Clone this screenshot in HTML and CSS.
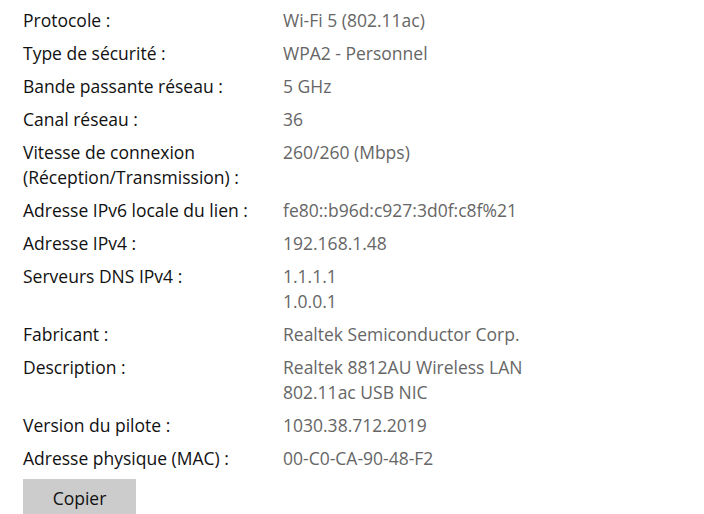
FILE: index.html
```html
<!DOCTYPE html>
<html lang="fr">
<head>
<meta charset="utf-8">
<link rel="stylesheet" href="styles.css">
</head>
<body>
<div class="props">
  <div class="label">Protocole :</div><div class="value">Wi-Fi 5 (802.11ac)</div>
  <div class="label">Type de sécurité :</div><div class="value">WPA2 - Personnel</div>
  <div class="label">Bande passante réseau :</div><div class="value">5 GHz</div>
  <div class="label">Canal réseau :</div><div class="value">36</div>
  <div class="label">Vitesse de connexion<br>(Réception/Transmission) :</div><div class="value">260/260 (Mbps)</div>
  <div class="label">Adresse IPv6 locale du lien :</div><div class="value">fe80::b96d:c927:3d0f:c8f%21</div>
  <div class="label">Adresse IPv4 :</div><div class="value">192.168.1.48</div>
  <div class="label">Serveurs DNS IPv4 :</div><div class="value">1.1.1.1<br>1.0.0.1</div>
  <div class="label">Fabricant :</div><div class="value">Realtek Semiconductor Corp.</div>
  <div class="label">Description :</div><div class="value">Realtek 8812AU Wireless LAN<br>802.11ac USB NIC</div>
  <div class="label">Version du pilote :</div><div class="value">1030.38.712.2019</div>
  <div class="label">Adresse physique (MAC) :</div><div class="value">00-C0-CA-90-48-F2</div>
</div>
<button class="copy">Copier</button>
</body>
</html>
```
FILE: styles.css
```css
html, body {
  margin: 0;
  background: #fff;
}
body {
  padding: 8px 0 0 23px;
  font-family: "Open Sans", "Noto Sans", sans-serif;
  font-size: 17.5px;
  line-height: 25px;
  overflow: hidden;
  height: 514px;
  box-sizing: border-box;
}
.props {
  display: grid;
  grid-template-columns: 260px auto;
  row-gap: 8px;
}
.label {
  color: #111;
}
.value {
  color: #666;
}
.copy {
  margin-top: 8px;
  width: 113px;
  height: 40px;
  border: none;
  background: #cccccc;
  color: #111;
  font-family: inherit;
  font-size: 17.5px;
  padding: 0 0 2px;
}
```
